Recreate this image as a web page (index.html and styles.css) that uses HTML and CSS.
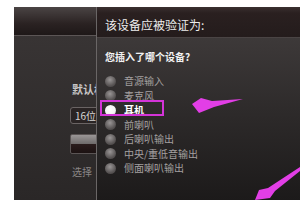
FILE: index.html
```html
<!DOCTYPE html>
<html>
<head>
<meta charset="utf-8">
<link rel="stylesheet" href="styles.css">
</head>
<body>
<div class="desk">
  <div class="win">
    <div class="win-head"></div>
    <div class="win-body">
      <div class="lbl">默认格式</div>
      <div class="select">16位</div>
      <div class="btn"></div>
      <div class="hint">选择</div>
    </div>
  </div>
  <div class="dlg">
    <div class="dlg-head">该设备应被验证为:</div>
    <div class="dlg-body">
      <div class="q">您插入了哪个设备?</div>
      <ul class="opts">
        <li class="opt"><span class="dot"></span>音源输入</li>
        <li class="opt"><span class="dot"></span>麦克风</li>
        <li class="opt sel"><span class="dot"></span>耳机</li>
        <li class="opt"><span class="dot"></span>前喇叭</li>
        <li class="opt"><span class="dot"></span>后喇叭输出</li>
        <li class="opt"><span class="dot"></span>中央/重低音输出</li>
        <li class="opt"><span class="dot"></span>侧面喇叭输出</li>
      </ul>
    </div>
    <div class="mark"></div>
  </div>
  <svg class="arrows" width="300" height="200" viewBox="0 0 300 200">
    <polygon fill="#e23ee6" points="192,104 201,98 212,101 243,99 214,107 199,113"/>
    <polygon fill="#e23ee6" points="300,167 268,188 259,190 255,200 270,198 275,191 300,171"/>
  </svg>
</div>
</body>
</html>
```
FILE: styles.css
```css
html, body { margin: 0; padding: 0; background: #fff; }
body { font-family: "Noto Sans CJK SC", "Noto Sans", sans-serif; }
.desk { position: relative; width: 300px; height: 200px; overflow: hidden; }
.win {
  margin: 7px 0 0 14px;
  height: 193px;
  background: #2e2b2b;
  display: flex;
  flex-direction: column;
}
.win-head {
  height: 28px;
  background: linear-gradient(#4a4444, #2a2222 60%, #1e1818);
  border-bottom: 1px solid #5c5656;
}
.win-body {
  flex: 1;
  background: linear-gradient(#383434, #2a2727);
  padding: 46px 0 0 56px;
  display: flex;
  flex-direction: column;
  align-items: flex-start;
}
.lbl { font-size: 11px; font-weight: bold; color: #c8c6c6; line-height: 14px; margin-left: 2px; white-space: nowrap; }
.select {
  margin-top: 11px;
  width: 60px;
  height: 15px;
  border: 1px solid #6a6464;
  border-radius: 3px;
  background: #2a2424;
  color: #d8d6d6;
  font-size: 10px;
  line-height: 15px;
  padding-left: 4px;
  white-space: nowrap;
}
.btn {
  margin-top: 10px;
  width: 60px;
  height: 18px;
  border: 1px solid #5a5454;
  border-radius: 2px;
  background: linear-gradient(#9a9696, #6e6a6a 50%, #2a1c1c 52%, #1c1212);
}
.hint { margin-top: 12px; margin-left: 2px; font-size: 10px; line-height: 12px; color: #8a8686; white-space: nowrap; }
.dlg {
  position: absolute;
  left: 96px;
  top: 7px;
  right: 0;
  bottom: 0;
  border-left: 1px solid #6a6666;
  display: flex;
  flex-direction: column;
}
.dlg-head {
  height: 27px;
  padding-top: 3px;
  background: linear-gradient(#3a3030, #2a2020 20%, #241c1c);
  border-bottom: 1px solid #4a4444;
  color: #ececec;
  font-size: 12px;
  line-height: 30px;
  padding-left: 8px;
  white-space: nowrap;
}
.dlg-body {
  flex: 1;
  background: linear-gradient(#3d3939, #2c2929 50%, #1c1a1a);
  padding: 13px 0 0 0;
}
.q { font-size: 10px; font-weight: bold; color: #f2f2f2; line-height: 12px; padding-left: 8px; white-space: nowrap; }
.opts { list-style: none; margin: 11px 0 0; padding: 0 0 0 8px; }
.opt {
  height: 14.5px;
  display: flex;
  align-items: center;
  gap: 8px;
  font-size: 10px;
  line-height: 12px;
  color: #a4a0a0;
  white-space: nowrap;
}
.dot {
  width: 11px;
  height: 11px;
  border-radius: 50%;
  background: radial-gradient(circle at 45% 35%, #9a9696, #5a5656 60%, #3a3636);
  flex: none;
}
.sel { color: #ffffff; font-weight: bold; }
.sel .dot { background: radial-gradient(circle at 45% 40%, #ffffff, #f4f4f4 55%, #b8b8b8); }
.mark {
  position: absolute;
  left: 3px;
  top: 93px;
  width: 60px;
  height: 12px;
  border: 2px solid #d434d8;
}
.arrows { position: absolute; left: 0; top: 0; }
```
